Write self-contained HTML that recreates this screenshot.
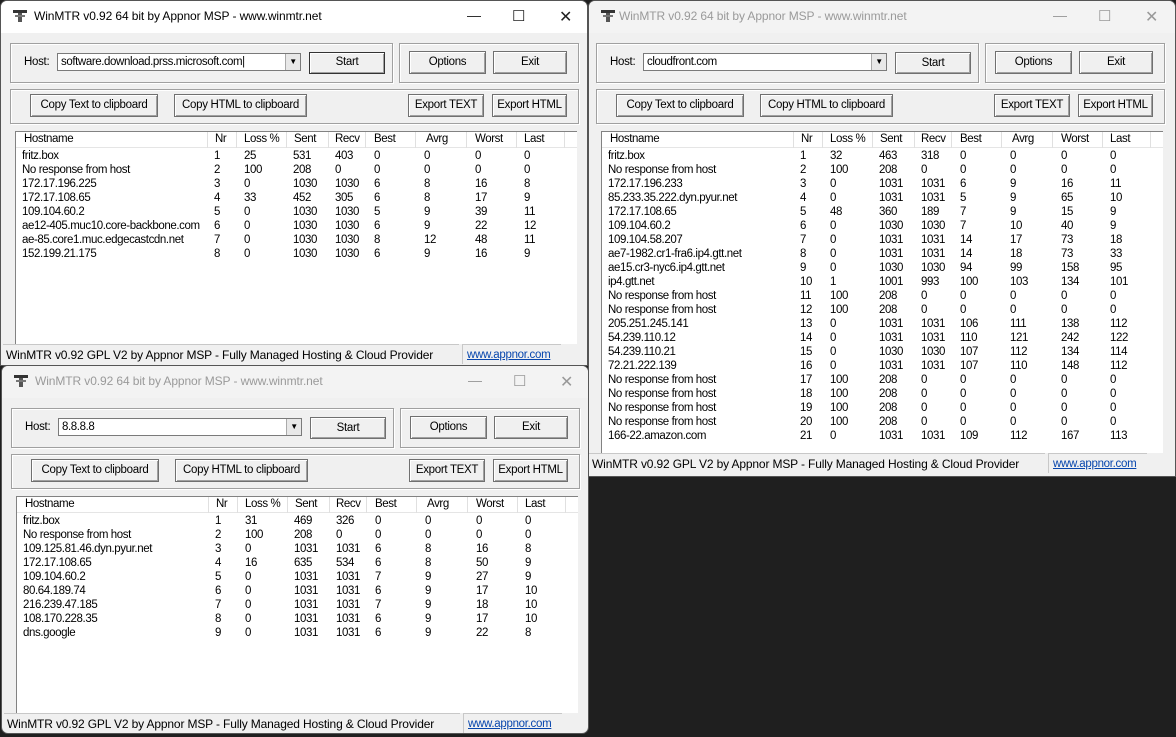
<!DOCTYPE html>
<html><head><meta charset="utf-8"><style>
*{margin:0;padding:0;box-sizing:border-box}
body{width:1176px;height:737px;background:#1f1f1f;position:relative;overflow:hidden;font-family:"Liberation Sans",Arial,sans-serif;color:#000}
.w{position:absolute;background:#f0f0f0;border:1px solid #555;border-radius:7px 7px 0 0;overflow:hidden}
.in{position:absolute;left:0;top:0}
.tb{position:absolute;left:0;top:0;height:32px;background:#f3f3f3}
.tb.act{background:#fff}
.tt{position:absolute;left:33px;top:8px;font-size:12px;letter-spacing:-0.1px;color:#9a9a9a;white-space:nowrap}
.act .tt{color:#000}
.ic{position:absolute;left:12px;top:9px;width:14px;height:12px}
.ctl{position:absolute;top:6px;color:#999;font-size:14px}
.act .ctl{color:#222}
.a{position:absolute;white-space:nowrap;font-size:11.5px;letter-spacing:-0.3px}
.g{position:absolute;border:1px solid #a0a0a0;box-shadow:inset 1px 1px #fff,1px 1px #fff}
.b{position:absolute;border:1px solid #707070;background:#f0f0f0;box-shadow:inset 1px 1px #fff,inset -1px -1px #a0a0a0;font-size:11.5px;text-align:center;white-space:nowrap;letter-spacing:-0.3px}
.cb{position:absolute;background:#fff;border:1px solid #7a7a7a;font-size:11.5px;letter-spacing:-0.4px;padding-left:3px;line-height:16px}
.dd{position:absolute;right:0;top:0;width:15px;height:16px;border-left:1px solid #aaa;background:#e8e8e8;font-size:8px;text-align:center;line-height:16px}
.lst{position:absolute;background:#fff;border-left:1px solid #828282;border-top:1px solid #828282;overflow:hidden}
.hd{position:absolute;left:0;top:0;height:16px;width:100%;background:#fff;border-bottom:1px solid #e5e5e5}
.hd b{position:absolute;top:0;height:16px;border-right:1px solid #e0e0e0;font-weight:normal}
.hd i,.r i{position:absolute;font-style:normal;font-size:11.5px;letter-spacing:-0.4px;white-space:nowrap}
.hd i{top:1px}
.r{position:absolute;left:0;height:14px;width:100%}
.r i{top:0}
.c i:nth-of-type(1){left:6px}.c i:nth-of-type(2){left:198px}.c i:nth-of-type(3){left:228px}.c i:nth-of-type(4){left:277px}.c i:nth-of-type(5){left:319px}.c i:nth-of-type(6){left:358px}.c i:nth-of-type(7){left:408px}.c i:nth-of-type(8){left:459px}.c i:nth-of-type(9){left:508px}
.hd.c i:nth-of-type(1){left:8px}.hd.c i:nth-of-type(2){left:199px}.hd.c i:nth-of-type(3){left:228px}.hd.c i:nth-of-type(4){left:278px}.hd.c i:nth-of-type(5){left:319px}.hd.c i:nth-of-type(6){left:358px}.hd.c i:nth-of-type(7){left:410px}.hd.c i:nth-of-type(8){left:459px}.hd.c i:nth-of-type(9){left:508px}
.st{position:absolute;left:2px;height:20px;width:456px;border-top:1px solid #c8c8c8;font-size:12px;letter-spacing:-0.15px;padding:3px 0 0 3px;white-space:nowrap;overflow:hidden}
.lk{position:absolute;left:461px;height:20px;width:99px;border-top:1px solid #c8c8c8;border-left:1px solid #c8c8c8;font-size:11.5px;letter-spacing:-0.3px;color:#0645ad;text-decoration:underline;padding:4px 0 0 4px}
</style></head><body>

<!-- WINDOW 1 -->
<div class="w" style="left:0;top:0;width:588px;height:366px">
<div class="in">
<div class="tb act" style="width:588px"><svg class="ic" viewBox="0 0 14 12"><rect x="0" y="0" width="14" height="3" fill="#333"/><rect x="5" y="3" width="4" height="9" fill="#555"/><rect x="2" y="5" width="10" height="2" fill="#777"/></svg><div class="tt">WinMTR v0.92 64 bit by Appnor MSP - www.winmtr.net</div><div class="ctl" style="left:466px">—</div><div class="ctl" style="left:511px;font-size:15px">☐</div><div class="ctl" style="left:558px;font-size:16px">✕</div></div>
<div class="g" style="left:9px;top:42px;width:383px;height:40px"></div>
<div class="a" style="left:23px;top:55px">Host:</div>
<div class="cb" style="left:56px;top:52px;width:244px;height:18px">software.download.prss.microsoft.com|<div class="dd">▼</div></div>
<div class="b" style="left:308px;top:51px;width:76px;height:22px;line-height:19px;border-color:#333">Start</div>
<div class="g" style="left:398px;top:42px;width:180px;height:40px"></div>
<div class="b" style="left:408px;top:50px;width:77px;height:23px;line-height:21px">Options</div>
<div class="b" style="left:492px;top:50px;width:74px;height:23px;line-height:21px">Exit</div>
<div class="g" style="left:9px;top:88px;width:569px;height:35px"></div>
<div class="b" style="left:29px;top:93px;width:128px;height:23px;line-height:21px">Copy Text to clipboard</div>
<div class="b" style="left:173px;top:93px;width:133px;height:23px;line-height:21px">Copy HTML to clipboard</div>
<div class="b" style="left:407px;top:93px;width:76px;height:23px;line-height:21px">Export TEXT</div>
<div class="b" style="left:491px;top:93px;width:75px;height:23px;line-height:21px">Export HTML</div>
<div class="lst" style="left:14px;top:130px;width:562px;height:213px">
<div class="hd c"><b style="left:0;width:192px"></b><b style="left:192px;width:29px"></b><b style="left:221px;width:50px"></b><b style="left:271px;width:42px"></b><b style="left:313px;width:37px"></b><b style="left:350px;width:50px"></b><b style="left:400px;width:51px"></b><b style="left:451px;width:50px"></b><b style="left:501px;width:48px"></b><i>Hostname</i><i>Nr</i><i>Loss %</i><i>Sent</i><i>Recv</i><i>Best</i><i>Avrg</i><i>Worst</i><i>Last</i></div>
<div class="r c" style="top:18px"><i>fritz.box</i><i>1</i><i>25</i><i>531</i><i>403</i><i>0</i><i>0</i><i>0</i><i>0</i></div>
<div class="r c" style="top:32px"><i>No response from host</i><i>2</i><i>100</i><i>208</i><i>0</i><i>0</i><i>0</i><i>0</i><i>0</i></div>
<div class="r c" style="top:46px"><i>172.17.196.225</i><i>3</i><i>0</i><i>1030</i><i>1030</i><i>6</i><i>8</i><i>16</i><i>8</i></div>
<div class="r c" style="top:60px"><i>172.17.108.65</i><i>4</i><i>33</i><i>452</i><i>305</i><i>6</i><i>8</i><i>17</i><i>9</i></div>
<div class="r c" style="top:74px"><i>109.104.60.2</i><i>5</i><i>0</i><i>1030</i><i>1030</i><i>5</i><i>9</i><i>39</i><i>11</i></div>
<div class="r c" style="top:88px"><i>ae12-405.muc10.core-backbone.com</i><i>6</i><i>0</i><i>1030</i><i>1030</i><i>6</i><i>9</i><i>22</i><i>12</i></div>
<div class="r c" style="top:102px"><i>ae-85.core1.muc.edgecastcdn.net</i><i>7</i><i>0</i><i>1030</i><i>1030</i><i>8</i><i>12</i><i>48</i><i>11</i></div>
<div class="r c" style="top:116px"><i>152.199.21.175</i><i>8</i><i>0</i><i>1030</i><i>1030</i><i>6</i><i>9</i><i>16</i><i>9</i></div>
</div>
<div class="st" style="top:343px">WinMTR v0.92 GPL V2 by Appnor MSP - Fully Managed Hosting &amp; Cloud Provider</div>
<div class="lk" style="top:343px">www.appnor.com</div>
</div></div>

<!-- WINDOW 2 -->
<div class="w" style="left:588px;top:0;width:588px;height:477px">
<div class="in" style="left:-2px">
<div class="tb" style="width:590px"><svg class="ic" style="left:14px" viewBox="0 0 14 12"><rect x="0" y="0" width="14" height="3" fill="#333"/><rect x="5" y="3" width="4" height="9" fill="#555"/><rect x="2" y="5" width="10" height="2" fill="#777"/></svg><div class="tt" style="left:32px">WinMTR v0.92 64 bit by Appnor MSP - www.winmtr.net</div><div class="ctl" style="left:466px">—</div><div class="ctl" style="left:511px;font-size:15px">☐</div><div class="ctl" style="left:558px;font-size:16px">✕</div></div>
<div class="g" style="left:9px;top:42px;width:383px;height:40px"></div>
<div class="a" style="left:23px;top:55px">Host:</div>
<div class="cb" style="left:56px;top:52px;width:244px;height:18px">cloudfront.com<div class="dd">▼</div></div>
<div class="b" style="left:308px;top:51px;width:76px;height:22px;line-height:20px">Start</div>
<div class="g" style="left:398px;top:42px;width:180px;height:40px"></div>
<div class="b" style="left:408px;top:50px;width:77px;height:23px;line-height:21px">Options</div>
<div class="b" style="left:492px;top:50px;width:74px;height:23px;line-height:21px">Exit</div>
<div class="g" style="left:9px;top:88px;width:569px;height:35px"></div>
<div class="b" style="left:29px;top:93px;width:128px;height:23px;line-height:21px">Copy Text to clipboard</div>
<div class="b" style="left:173px;top:93px;width:133px;height:23px;line-height:21px">Copy HTML to clipboard</div>
<div class="b" style="left:407px;top:93px;width:76px;height:23px;line-height:21px">Export TEXT</div>
<div class="b" style="left:491px;top:93px;width:75px;height:23px;line-height:21px">Export HTML</div>
<div class="lst" style="left:14px;top:130px;width:562px;height:322px">
<div class="hd c"><b style="left:0;width:192px"></b><b style="left:192px;width:29px"></b><b style="left:221px;width:50px"></b><b style="left:271px;width:42px"></b><b style="left:313px;width:37px"></b><b style="left:350px;width:50px"></b><b style="left:400px;width:51px"></b><b style="left:451px;width:50px"></b><b style="left:501px;width:48px"></b><i>Hostname</i><i>Nr</i><i>Loss %</i><i>Sent</i><i>Recv</i><i>Best</i><i>Avrg</i><i>Worst</i><i>Last</i></div>
<div class="r c" style="top:18px"><i>fritz.box</i><i>1</i><i>32</i><i>463</i><i>318</i><i>0</i><i>0</i><i>0</i><i>0</i></div>
<div class="r c" style="top:32px"><i>No response from host</i><i>2</i><i>100</i><i>208</i><i>0</i><i>0</i><i>0</i><i>0</i><i>0</i></div>
<div class="r c" style="top:46px"><i>172.17.196.233</i><i>3</i><i>0</i><i>1031</i><i>1031</i><i>6</i><i>9</i><i>16</i><i>11</i></div>
<div class="r c" style="top:60px"><i>85.233.35.222.dyn.pyur.net</i><i>4</i><i>0</i><i>1031</i><i>1031</i><i>5</i><i>9</i><i>65</i><i>10</i></div>
<div class="r c" style="top:74px"><i>172.17.108.65</i><i>5</i><i>48</i><i>360</i><i>189</i><i>7</i><i>9</i><i>15</i><i>9</i></div>
<div class="r c" style="top:88px"><i>109.104.60.2</i><i>6</i><i>0</i><i>1030</i><i>1030</i><i>7</i><i>10</i><i>40</i><i>9</i></div>
<div class="r c" style="top:102px"><i>109.104.58.207</i><i>7</i><i>0</i><i>1031</i><i>1031</i><i>14</i><i>17</i><i>73</i><i>18</i></div>
<div class="r c" style="top:116px"><i>ae7-1982.cr1-fra6.ip4.gtt.net</i><i>8</i><i>0</i><i>1031</i><i>1031</i><i>14</i><i>18</i><i>73</i><i>33</i></div>
<div class="r c" style="top:130px"><i>ae15.cr3-nyc6.ip4.gtt.net</i><i>9</i><i>0</i><i>1030</i><i>1030</i><i>94</i><i>99</i><i>158</i><i>95</i></div>
<div class="r c" style="top:144px"><i>ip4.gtt.net</i><i>10</i><i>1</i><i>1001</i><i>993</i><i>100</i><i>103</i><i>134</i><i>101</i></div>
<div class="r c" style="top:158px"><i>No response from host</i><i>11</i><i>100</i><i>208</i><i>0</i><i>0</i><i>0</i><i>0</i><i>0</i></div>
<div class="r c" style="top:172px"><i>No response from host</i><i>12</i><i>100</i><i>208</i><i>0</i><i>0</i><i>0</i><i>0</i><i>0</i></div>
<div class="r c" style="top:186px"><i>205.251.245.141</i><i>13</i><i>0</i><i>1031</i><i>1031</i><i>106</i><i>111</i><i>138</i><i>112</i></div>
<div class="r c" style="top:200px"><i>54.239.110.12</i><i>14</i><i>0</i><i>1031</i><i>1031</i><i>110</i><i>121</i><i>242</i><i>122</i></div>
<div class="r c" style="top:214px"><i>54.239.110.21</i><i>15</i><i>0</i><i>1030</i><i>1030</i><i>107</i><i>112</i><i>134</i><i>114</i></div>
<div class="r c" style="top:228px"><i>72.21.222.139</i><i>16</i><i>0</i><i>1031</i><i>1031</i><i>107</i><i>110</i><i>148</i><i>112</i></div>
<div class="r c" style="top:242px"><i>No response from host</i><i>17</i><i>100</i><i>208</i><i>0</i><i>0</i><i>0</i><i>0</i><i>0</i></div>
<div class="r c" style="top:256px"><i>No response from host</i><i>18</i><i>100</i><i>208</i><i>0</i><i>0</i><i>0</i><i>0</i><i>0</i></div>
<div class="r c" style="top:270px"><i>No response from host</i><i>19</i><i>100</i><i>208</i><i>0</i><i>0</i><i>0</i><i>0</i><i>0</i></div>
<div class="r c" style="top:284px"><i>No response from host</i><i>20</i><i>100</i><i>208</i><i>0</i><i>0</i><i>0</i><i>0</i><i>0</i></div>
<div class="r c" style="top:298px"><i>166-22.amazon.com</i><i>21</i><i>0</i><i>1031</i><i>1031</i><i>109</i><i>112</i><i>167</i><i>113</i></div>
</div>
<div class="st" style="top:452px">WinMTR v0.92 GPL V2 by Appnor MSP - Fully Managed Hosting &amp; Cloud Provider</div>
<div class="lk" style="top:452px">www.appnor.com</div>
</div></div>

<!-- WINDOW 3 -->
<div class="w" style="left:1px;top:365px;width:588px;height:369px;border-radius:7px">
<div class="in" style="top:0">
<div class="tb" style="width:588px"><svg class="ic" viewBox="0 0 14 12"><rect x="0" y="0" width="14" height="3" fill="#333"/><rect x="5" y="3" width="4" height="9" fill="#555"/><rect x="2" y="5" width="10" height="2" fill="#777"/></svg><div class="tt">WinMTR v0.92 64 bit by Appnor MSP - www.winmtr.net</div><div class="ctl" style="left:466px">—</div><div class="ctl" style="left:511px;font-size:15px">☐</div><div class="ctl" style="left:558px;font-size:16px">✕</div></div>
<div class="g" style="left:9px;top:42px;width:383px;height:40px"></div>
<div class="a" style="left:23px;top:55px">Host:</div>
<div class="cb" style="left:56px;top:52px;width:244px;height:18px">8.8.8.8<div class="dd">▼</div></div>
<div class="b" style="left:308px;top:51px;width:76px;height:22px;line-height:20px">Start</div>
<div class="g" style="left:398px;top:42px;width:180px;height:40px"></div>
<div class="b" style="left:408px;top:50px;width:77px;height:23px;line-height:21px">Options</div>
<div class="b" style="left:492px;top:50px;width:74px;height:23px;line-height:21px">Exit</div>
<div class="g" style="left:9px;top:88px;width:569px;height:35px"></div>
<div class="b" style="left:29px;top:93px;width:128px;height:23px;line-height:21px">Copy Text to clipboard</div>
<div class="b" style="left:173px;top:93px;width:133px;height:23px;line-height:21px">Copy HTML to clipboard</div>
<div class="b" style="left:407px;top:93px;width:76px;height:23px;line-height:21px">Export TEXT</div>
<div class="b" style="left:491px;top:93px;width:75px;height:23px;line-height:21px">Export HTML</div>
<div class="lst" style="left:14px;top:130px;width:562px;height:217px">
<div class="hd c"><b style="left:0;width:192px"></b><b style="left:192px;width:29px"></b><b style="left:221px;width:50px"></b><b style="left:271px;width:42px"></b><b style="left:313px;width:37px"></b><b style="left:350px;width:50px"></b><b style="left:400px;width:51px"></b><b style="left:451px;width:50px"></b><b style="left:501px;width:48px"></b><i>Hostname</i><i>Nr</i><i>Loss %</i><i>Sent</i><i>Recv</i><i>Best</i><i>Avrg</i><i>Worst</i><i>Last</i></div>
<div class="r c" style="top:18px"><i>fritz.box</i><i>1</i><i>31</i><i>469</i><i>326</i><i>0</i><i>0</i><i>0</i><i>0</i></div>
<div class="r c" style="top:32px"><i>No response from host</i><i>2</i><i>100</i><i>208</i><i>0</i><i>0</i><i>0</i><i>0</i><i>0</i></div>
<div class="r c" style="top:46px"><i>109.125.81.46.dyn.pyur.net</i><i>3</i><i>0</i><i>1031</i><i>1031</i><i>6</i><i>8</i><i>16</i><i>8</i></div>
<div class="r c" style="top:60px"><i>172.17.108.65</i><i>4</i><i>16</i><i>635</i><i>534</i><i>6</i><i>8</i><i>50</i><i>9</i></div>
<div class="r c" style="top:74px"><i>109.104.60.2</i><i>5</i><i>0</i><i>1031</i><i>1031</i><i>7</i><i>9</i><i>27</i><i>9</i></div>
<div class="r c" style="top:88px"><i>80.64.189.74</i><i>6</i><i>0</i><i>1031</i><i>1031</i><i>6</i><i>9</i><i>17</i><i>10</i></div>
<div class="r c" style="top:102px"><i>216.239.47.185</i><i>7</i><i>0</i><i>1031</i><i>1031</i><i>7</i><i>9</i><i>18</i><i>10</i></div>
<div class="r c" style="top:116px"><i>108.170.228.35</i><i>8</i><i>0</i><i>1031</i><i>1031</i><i>6</i><i>9</i><i>17</i><i>10</i></div>
<div class="r c" style="top:130px"><i>dns.google</i><i>9</i><i>0</i><i>1031</i><i>1031</i><i>6</i><i>9</i><i>22</i><i>8</i></div>
</div>
<div class="st" style="top:347px">WinMTR v0.92 GPL V2 by Appnor MSP - Fully Managed Hosting &amp; Cloud Provider</div>
<div class="lk" style="top:347px">www.appnor.com</div>
</div></div>
</body></html>
